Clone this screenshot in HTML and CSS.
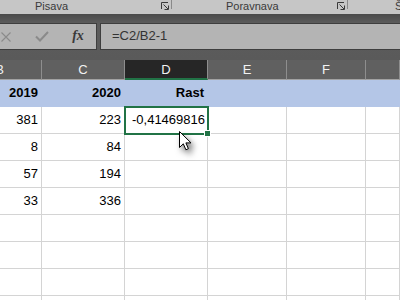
FILE: index.html
```html
<!DOCTYPE html>
<html lang="sl">
<head>
    <title>Rast</title>
    <link rel="stylesheet" href="styles.css">
</head>
<body>
    <div class="ribbon">
        <div class="group group-font">
            <span class="group-label">Pisava</span>
            <svg class="launcher" width="8" height="8" viewBox="0 0 8 8">
                <path d="M0.5 7 V0.5 H7" fill="none" stroke="#3a3a3a"/>
                <path d="M2.5 2.5 L7 7 M3.5 7.5 H7.5 V3.5" fill="none" stroke="#3a3a3a"/>
            </svg>
            <span class="sep"></span>
        </div>
        <div class="group group-align">
            <span class="group-label">Poravnava</span>
            <svg class="launcher" width="8" height="8" viewBox="0 0 8 8">
                <path d="M0.5 7 V0.5 H7" fill="none" stroke="#3a3a3a"/>
                <path d="M2.5 2.5 L7 7 M3.5 7.5 H7.5 V3.5" fill="none" stroke="#3a3a3a"/>
            </svg>
            <span class="sep"></span>
        </div>
        <div class="group group-number">
            <span class="group-label">Število</span>
        </div>
    </div>

    <div class="formula-bar">
        <div class="fx-buttons">
            <span class="fx-btn">
                <svg width="10" height="10" viewBox="0 0 10 10">
                    <path d="M0.5 0.5 L9.5 9.5 M9.5 0.5 L0.5 9.5" stroke="#8a8a8a" stroke-width="1.1"/>
                </svg>
            </span>
            <span class="fx-btn">
                <svg width="14" height="11" viewBox="0 0 14 11">
                    <path d="M1 5.5 L5 9.5 L13 1" fill="none" stroke="#8a8a8a" stroke-width="2"/>
                </svg>
            </span>
            <span class="fx-btn fx-label">fx</span>
        </div>
        <div class="formula-input">=C2/B2-1</div>
    </div>

    <div class="sheet">
        <div class="row col-heads">
            <div class="head col-b">B</div>
            <div class="head col-c">C</div>
            <div class="head col-d active">D</div>
            <div class="head col-e">E</div>
            <div class="head col-f">F</div>
            <div class="head col-g"></div>
        </div>
        <div class="row title-row">
            <div class="cell col-b">2019</div>
            <div class="cell col-c">2020</div>
            <div class="cell col-d">Rast</div>
            <div class="cell col-e"></div>
            <div class="cell col-f"></div>
            <div class="cell col-g"></div>
        </div>
        <div class="row">
            <div class="cell col-b">381</div>
            <div class="cell col-c">223</div>
            <div class="cell col-d selected">-0,41469816<span class="fill-handle"></span></div>
            <div class="cell col-e"></div>
            <div class="cell col-f"></div>
            <div class="cell col-g"></div>
        </div>
        <div class="row">
            <div class="cell col-b">8</div>
            <div class="cell col-c">84</div>
            <div class="cell col-d"></div>
            <div class="cell col-e"></div>
            <div class="cell col-f"></div>
            <div class="cell col-g"></div>
        </div>
        <div class="row">
            <div class="cell col-b">57</div>
            <div class="cell col-c">194</div>
            <div class="cell col-d"></div>
            <div class="cell col-e"></div>
            <div class="cell col-f"></div>
            <div class="cell col-g"></div>
        </div>
        <div class="row">
            <div class="cell col-b">33</div>
            <div class="cell col-c">336</div>
            <div class="cell col-d"></div>
            <div class="cell col-e"></div>
            <div class="cell col-f"></div>
            <div class="cell col-g"></div>
        </div>
        <div class="row">
            <div class="cell col-b"></div>
            <div class="cell col-c"></div>
            <div class="cell col-d"></div>
            <div class="cell col-e"></div>
            <div class="cell col-f"></div>
            <div class="cell col-g"></div>
        </div>
        <div class="row">
            <div class="cell col-b"></div>
            <div class="cell col-c"></div>
            <div class="cell col-d"></div>
            <div class="cell col-e"></div>
            <div class="cell col-f"></div>
            <div class="cell col-g"></div>
        </div>
        <div class="row">
            <div class="cell col-b"></div>
            <div class="cell col-c"></div>
            <div class="cell col-d"></div>
            <div class="cell col-e"></div>
            <div class="cell col-f"></div>
            <div class="cell col-g"></div>
        </div>
        <div class="row">
            <div class="cell col-b"></div>
            <div class="cell col-c"></div>
            <div class="cell col-d"></div>
            <div class="cell col-e"></div>
            <div class="cell col-f"></div>
            <div class="cell col-g"></div>
        </div>
    </div>

    <svg class="pointer" width="14" height="20" viewBox="0 0 14 20">
        <path d="M0.5 0.5 L0.5 16.5 L4.3 12.8 L6.9 18.8 L9.4 17.7 L6.9 11.9 L12 11.9 Z" fill="#fff" stroke="#000" stroke-linejoin="round"/>
    </svg>
</body>
</html>
```

FILE: styles.css
```css
body {
    margin: 0;
    width: 400px;
    height: 300px;
    overflow: hidden;
    position: relative;
    background-color: #fff;
    font-family: "Liberation Sans", Arial, sans-serif;
}

/* ribbon strip */
.ribbon {
    display: flex;
    height: 14px;
    background-color: #c6c6c6;
    color: #3a3a3a;
    font-size: 11px;
    white-space: nowrap;
    overflow: hidden;
}

.group {
    display: flex;
    align-items: flex-start;
    box-sizing: border-box;
    flex-shrink: 0;
}

.group-font {
    width: 172px;
    padding-left: 35px;
}

.group-align {
    width: 176px;
    padding-left: 54px;
}

.group-number {
    padding-left: 47px;
}

.group-label {
    line-height: 12px;
}

.launcher {
    margin: 2px 2px 0 auto;
}

.sep {
    width: 1px;
    height: 9px;
    background-color: #8a8a8a;
}

/* formula bar */
.formula-bar {
    display: flex;
    height: 46px;
    box-sizing: border-box;
    padding: 9px 0 10px;
    background: linear-gradient(#4a4a4a, #5c5c5c 9px, #5a5a5a);
}

.fx-buttons,
.formula-input {
    box-sizing: border-box;
    height: 27px;
    border: 1px solid #3e3e3e;
    background-color: #b4b4b4;
}

.fx-buttons {
    display: flex;
    width: 110px;
    margin-left: -13px;
    flex-shrink: 0;
}

.fx-btn {
    width: 36px;
    display: flex;
    align-items: center;
    justify-content: center;
}

.fx-label {
    font-family: "Liberation Serif", "Times New Roman", serif;
    font-style: italic;
    font-weight: bold;
    font-size: 14px;
    color: #3a3a3a;
    padding-bottom: 1px;
}

.formula-input {
    flex: 1;
    margin-left: 3px;
    margin-right: -5px;
    padding-left: 11px;
    font-size: 13px;
    line-height: 24px;
    color: #333;
}

/* sheet grid */
.sheet {
    margin-left: -42px;
}

.row {
    display: flex;
}

.col-b { width: 84px; }
.col-c { width: 83px; }
.col-d { width: 83px; }
.col-e { width: 79px; }
.col-f { width: 79px; }
.col-g { flex: 1; }

.head {
    box-sizing: border-box;
    flex-shrink: 0;
    height: 20px;
    background-color: #606060;
    border-right: 1px solid #8e8e8e;
    border-bottom: 1px solid #a2a2a2;
    color: #f2f2f2;
    font-size: 13px;
    line-height: 19px;
    text-align: center;
}

.head.active {
    background-color: #262626;
    border-bottom: 2px solid #217346;
}

.cell {
    box-sizing: border-box;
    flex-shrink: 0;
    height: 27px;
    padding-right: 3px;
    border-right: 1px solid #d4d4d4;
    border-bottom: 1px solid #d4d4d4;
    font-size: 13px;
    line-height: 25px;
    text-align: right;
    color: #000;
}

.title-row .cell {
    background-color: #b4c6e7;
    border-color: #b4c6e7;
    font-weight: bold;
}

.selected {
    position: relative;
    padding-right: 2px;
}

.selected::after {
    content: "";
    position: absolute;
    left: -1px;
    top: -1px;
    width: 85px;
    height: 29px;
    box-sizing: border-box;
    border: 2px solid #217346;
}

.fill-handle {
    position: absolute;
    left: 79px;
    top: 23px;
    width: 7px;
    height: 7px;
    box-sizing: border-box;
    background-color: #217346;
    border: 1px solid #fff;
    z-index: 1;
}

.pointer {
    position: absolute;
    left: 179px;
    top: 131px;
    filter: drop-shadow(3px 4px 3px rgba(0, 0, 0, 0.55));
}
```
